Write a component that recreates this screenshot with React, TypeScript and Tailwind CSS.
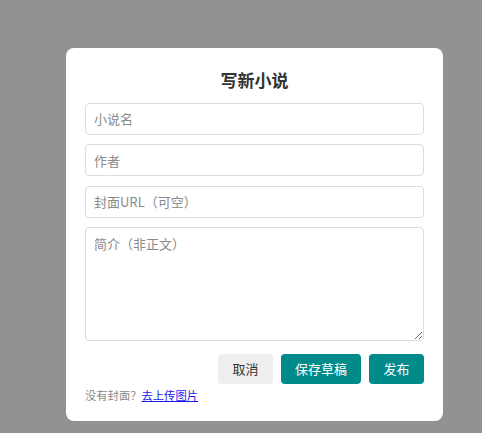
export default function App() {
  const font = { fontFamily: '"Noto Sans CJK SC", "Noto Sans", sans-serif' };
  return (
    <div
      className="min-h-screen w-full bg-[#929293] pl-[66px] pt-[48px]"
      style={font}
    >
      <div className="flex w-[377px] flex-col rounded-[8px] bg-white px-[19px] pb-[17px] pt-[20px]">
        <h2 className="mb-[10.5px] text-center text-[17px] font-bold leading-[24px] text-[#333]">
          写新小说
        </h2>
        <div className="flex flex-col gap-[9.5px]">
          <input
            className="h-[32px] w-full rounded-[4px] border border-[#dcdcdc] px-[8px] text-[13px] text-[#333] placeholder:text-[#8a8a8a] outline-none"
            placeholder="小说名"
          />
          <input
            className="h-[32px] w-full rounded-[4px] border border-[#dcdcdc] px-[8px] text-[13px] text-[#333] placeholder:text-[#8a8a8a] outline-none"
            placeholder="作者"
          />
          <input
            className="h-[32px] w-full rounded-[4px] border border-[#dcdcdc] px-[8px] text-[13px] text-[#333] placeholder:text-[#8a8a8a] outline-none"
            placeholder="封面URL（可空）"
          />
          <textarea
            className="h-[113.5px] w-full rounded-[4px] border border-[#dcdcdc] px-[8px] py-[6px] text-[13px] leading-[20px] text-[#333] placeholder:text-[#8a8a8a] outline-none"
            placeholder="简介（非正文）"
          />
        </div>
        <div className="mt-[13px] flex justify-end gap-[8px]">
          <button className="h-[30px] rounded-[4px] bg-[#eeeeee] px-[14.5px] text-[13px] text-[#333]">
            取消
          </button>
          <button className="h-[30px] rounded-[4px] bg-[#008b8b] px-[14px] text-[13px] text-white">
            保存草稿
          </button>
          <button className="h-[30px] rounded-[4px] bg-[#008b8b] px-[14.5px] text-[13px] text-white">
            发布
          </button>
        </div>
        <p className="mt-[2px] text-[11.3px] leading-[18px] text-[#8a8a8a]">
          没有封面？
          <a href="#" className="text-[#1a1aee] underline">
            去上传图片
          </a>
        </p>
      </div>
    </div>
  );
}
